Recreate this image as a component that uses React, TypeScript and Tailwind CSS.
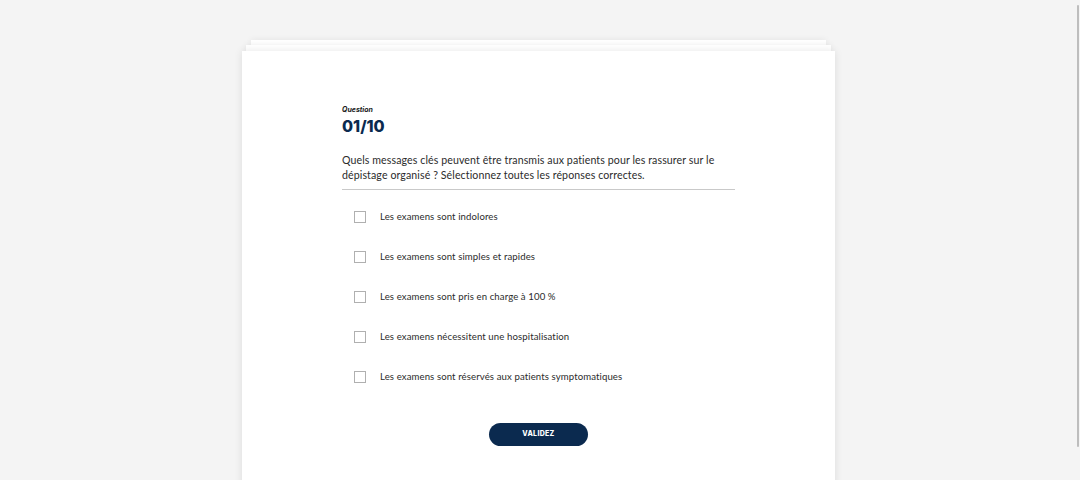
import React, { useState } from "react";

const answers = [
  "Les examens sont indolores",
  "Les examens sont simples et rapides",
  "Les examens sont pris en charge à 100 %",
  "Les examens nécessitent une hospitalisation",
  "Les examens sont réservés aux patients symptomatiques",
];

export default function App() {
  const [checked, setChecked] = useState<boolean[]>(answers.map(() => false));

  const toggle = (i: number) =>
    setChecked((prev) => prev.map((v, j) => (j === i ? !v : v)));

  return (
    <div className="relative h-[480px] w-[1080px] overflow-hidden bg-[#f4f4f4] font-['Lato',sans-serif]">
      <div className="flex w-[1077px] justify-center pt-[40px]">
        <div className="w-[593px]">
          {/* stacked sheets behind */}
          <div className="mx-[9px] h-[5px] bg-white shadow-[0_0_6px_rgba(0,0,0,0.08)]" />
          <div className="mx-[4px] h-[6px] bg-white shadow-[0_0_6px_rgba(0,0,0,0.08)]" />
          <div className="h-[440px] bg-white px-[100px] pt-[54px] shadow-[0_0_8px_rgba(0,0,0,0.1)]">
            <p className="text-[7px] font-bold italic leading-[10px] text-[#1a1a1a] font-['Inter',sans-serif]">
              Question
            </p>
            <h1 className="mt-[1px] text-[16px] font-extrabold leading-[20px] text-[#0b2a4f] font-['Inter',sans-serif]">
              01/10
            </h1>
            <p className="mt-[17px] text-[10.6px] leading-[15px] tracking-[0.1px] text-[#2b2b2b]">
              Quels messages clés peuvent être transmis aux patients pour les rassurer sur le
              dépistage organisé ? Sélectionnez toutes les réponses correctes.
            </p>
            <div className="mt-[6px] h-px bg-[#c9c9c9]" />
            <ul className="mt-[20px] flex flex-col gap-[26px] pl-[12px]">
              {answers.map((a, i) => (
                <li key={a}>
                  <label className="flex h-[14px] cursor-pointer items-center gap-[14px]">
                    <span
                      onClick={() => toggle(i)}
                      className={`h-[12px] w-[12px] border ${
                        checked[i] ? "border-[#0b2a4f] bg-[#0b2a4f]" : "border-[#b0b0b0] bg-white"
                      }`}
                    />
                    <span className="text-[9.6px] tracking-[0.1px] text-[#2b2b2b]">{a}</span>
                  </label>
                </li>
              ))}
            </ul>
            <div className="mt-[39px] flex justify-center">
              <button className="h-[23px] w-[99px] rounded-full bg-[#0b2a4f] text-[7px] font-extrabold tracking-[0.3px] text-white font-['Inter',sans-serif]">
                VALIDEZ
              </button>
            </div>
          </div>
        </div>
      </div>
      {/* scrollbar thumb */}
      <div className="absolute right-[1px] top-[5px] h-[442px] w-[2px] rounded-full bg-[#bdbdbd]" />
    </div>
  );
}
